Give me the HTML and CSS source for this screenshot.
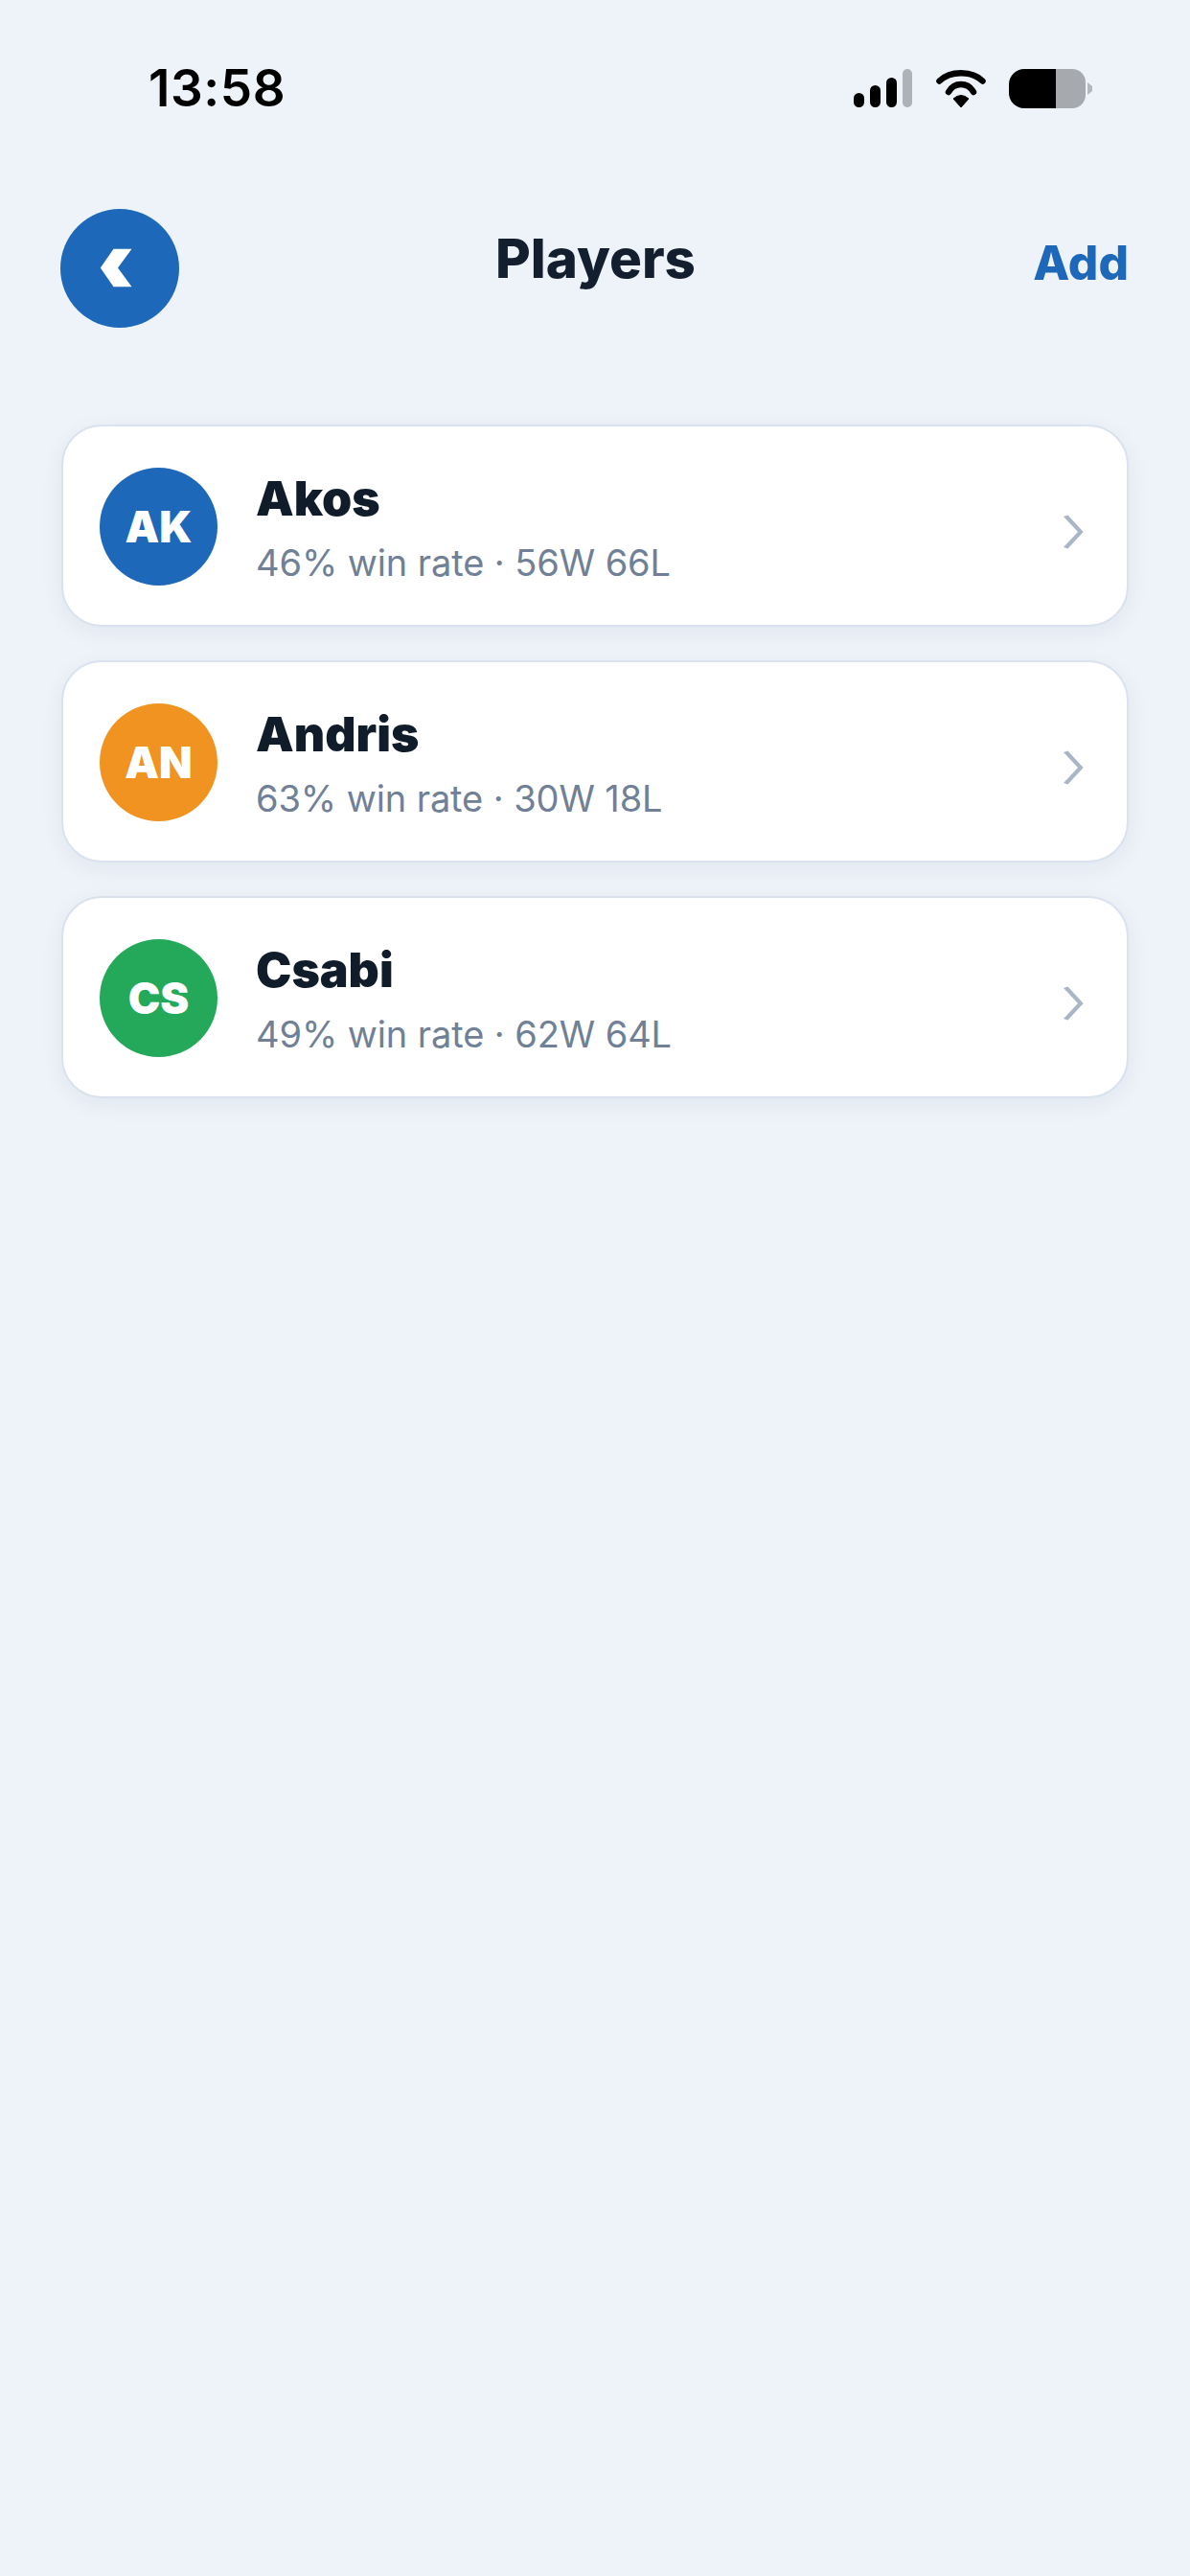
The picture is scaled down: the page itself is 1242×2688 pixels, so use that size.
FILE: index.html
```html
<!DOCTYPE html>
<html lang="en">
<head>
<meta charset="utf-8">
<title>Players</title>
<link rel="stylesheet" href="styles.css">
</head>
<body>
<div class="screen">
  <div class="status">
    <span class="time">13:58</span>
    <div class="status-icons">
      <svg class="signal" width="62" height="40" viewBox="0 0 62 40"><rect x="0" y="25" width="11" height="15" rx="5.5" fill="#000"/><rect x="17" y="17" width="11" height="23" rx="5.5" fill="#000"/><rect x="34" y="9" width="11" height="31" rx="5.5" fill="#000"/><rect x="51" y="0" width="10" height="40" rx="5" fill="#aeb2b7"/></svg>
      <svg class="wifi" width="54" height="40" viewBox="0 0 54 40"><path d="M19 31 Q27 24 35 31 L27 40 Z" fill="#000" stroke="#000" stroke-width="1" stroke-linejoin="round"/><path d="M14 24 C20 13.300 34 13.300 40 24" fill="none" stroke="#000" stroke-width="6.500" stroke-linecap="round"/><path d="M4.500 12.500 C16 1.500 38 1.500 49.500 12.500" fill="none" stroke="#000" stroke-width="6.500" stroke-linecap="round"/></svg>
      <svg class="battery" width="88" height="42" viewBox="0 0 88 42"><path d="M16 0 H49 V41 H16 A16 16 0 0 1 0 25 V16 A16 16 0 0 1 16 0 Z" fill="#000"/><path d="M49 0 H66 A14 14 0 0 1 80 14 V27 A14 14 0 0 1 66 41 H49 Z" fill="#a6a9ad"/><path d="M82 14 L87 18 V23 L82 27 Z" fill="#b4b7bb"/></svg>
    </div>
  </div>
  <header class="nav">
    <button class="back" type="button" aria-label="Back">
      <svg width="34" height="42" viewBox="0 0 34 42"><path d="M0.800 20.500 L14.500 0.700 H33.500 L19 20.500 L33.500 40.300 H14.500 Z" fill="#fff"/></svg>
    </button>
    <h1 class="title">Players</h1>
    <span class="add">Add</span>
  </header>
  <main class="list">
    <article class="card">
      <div class="avatar blue">AK</div>
      <div class="info"><div class="name">Akos</div><div class="stats">46% win rate · 56W 66L</div></div>
      <svg class="chev" width="24" height="38" viewBox="0 0 24 38"><path d="M2 3 L6.500 1.500 L22.700 19 L6.500 36.500 L2 35 L17 19 Z" fill="#aab6c8"/></svg>
    </article>
    <article class="card">
      <div class="avatar orange">AN</div>
      <div class="info"><div class="name">Andris</div><div class="stats">63% win rate · 30W 18L</div></div>
      <svg class="chev" width="24" height="38" viewBox="0 0 24 38"><path d="M2 3 L6.500 1.500 L22.700 19 L6.500 36.500 L2 35 L17 19 Z" fill="#aab6c8"/></svg>
    </article>
    <article class="card">
      <div class="avatar green">CS</div>
      <div class="info"><div class="name">Csabi</div><div class="stats">49% win rate · 62W 64L</div></div>
      <svg class="chev" width="24" height="38" viewBox="0 0 24 38"><path d="M2 3 L6.500 1.500 L22.700 19 L6.500 36.500 L2 35 L17 19 Z" fill="#aab6c8"/></svg>
    </article>
  </main>
</div>
</body>
</html>
```
FILE: styles.css
```css
* { box-sizing: border-box; }
html, body { margin: 0; padding: 0; }
body { background: #eef3fa; font-family: Inter, "Liberation Sans", sans-serif; }
.screen { width: 1242px; height: 2688px; padding-top: 72px; overflow: hidden; }
.status { display: flex; justify-content: space-between; align-items: flex-start; height: 44px; padding: 0 101px 0 155px; }
.time { font-size: 53px; font-weight: 600; color: #000; line-height: 50px; letter-spacing: 0.6px; margin-top: -5px; }
.status-icons { display: flex; align-items: flex-start; gap: 23px; }
.status-icons svg { display: block; }
.nav { display: flex; align-items: center; justify-content: space-between; margin-top: 102px; padding: 0 64px 0 63px; height: 124px; position: relative; }
.back { width: 124px; height: 124px; border: 0; padding: 0 9px 0 0; border-radius: 50%; background: #1d68b9; display: flex; align-items: center; justify-content: center; }
.back svg { display: block; }
.title { position: absolute; left: 1px; right: 0; top: 0; margin: 0; text-align: center; font-size: 56.5px; font-weight: 800; color: #131f2e; line-height: 104px; }
.add { font-size: 49.5px; font-weight: 800; color: #1d68b9; line-height: 60px; margin-top: -12px; }
.list { display: flex; flex-direction: column; gap: 35px; margin: 101px 64px 0; }
.card { height: 211px; display: flex; align-items: center; padding: 2px 38px 0 38px; background: #fff; border: 2px solid #d9e2ee; border-radius: 42px; box-shadow: 0 6px 24px rgba(19, 31, 46, 0.06); }
.avatar { width: 123px; height: 123px; flex: none; border-radius: 50%; display: flex; align-items: center; justify-content: center; color: #fff; font-size: 45px; font-weight: 900; }
.blue { background: #1d68b9; }
.orange { background: #f09320; }
.green { background: #24a85a; }
.info { flex: 1; margin-left: 40px; }
.name { font-size: 50px; font-weight: 900; color: #111c2b; line-height: 60px; }
.stats { font-size: 38px; font-weight: 400; color: #708096; line-height: 46px; margin-top: 14px; letter-spacing: -0.1px; }
.chev { flex: none; margin: 11px 6px 0 0; }
```
